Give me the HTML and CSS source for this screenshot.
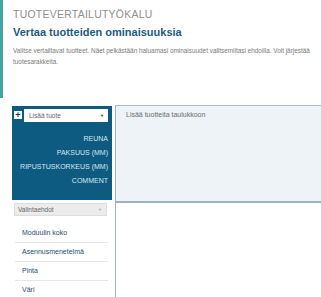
FILE: index.html
```html
<!DOCTYPE html>
<html lang="fi">
<head>
  <meta charset="UTF-8">
  <title>Tuotevertailutyökalu</title>
<link rel="stylesheet" href="styles.css">
</head>
<body>
  <div class="page">
    <div class="intro">
      <h1>Tuotevertailutyökalu</h1>
      <h2>Vertaa tuotteiden ominaisuuksia</h2>
      <p>Valitse vertailtavat tuotteet. Näet pelkästään haluamasi ominaisuudet valitsemiltasi ehdoilla. Voit järjestää tuotesarakkeita.</p>
    </div>

    <div class="tool">
      <div class="side">
        <div class="panel">
          <div class="add-row">
            <span class="plus">+</span>
            <div class="select white">
              <span>Lisää tuote</span>
              <span class="arrow">&#9660;</span>
            </div>
          </div>
          <ul class="labels">
            <li>Reuna</li>
            <li>Paksuus (mm)</li>
            <li>Ripustuskorkeus (mm)</li>
            <li>Comment</li>
          </ul>
        </div>

        <div class="select gray">
          <span>Valintaehdot</span>
          <span class="arrow">&#9660;</span>
        </div>
        <ul class="filters">
          <li>Moduulin koko</li>
          <li>Asennusmenetelmä</li>
          <li>Pinta</li>
          <li>Väri</li>
        </ul>
      </div>

      <div class="table">
        <div class="table-head">Lisää tuotteita taulukkoon</div>
        <div class="table-body"></div>
      </div>
    </div>
  </div>
</body>
</html>
```

FILE: styles.css
```css
body {
  margin: 0;
  font-family: "Liberation Sans", Arial, sans-serif;
  background: #fff;
  overflow: hidden;
}
.page {
  width: 321px;
}

.intro {
  border-left: 3px solid #3fa6a1;
  padding: 8px 0 0 10px;
  height: 98px;
  box-sizing: border-box;
}
.intro h1 {
  margin: 0;
  font-size: 10.4px;
  font-weight: normal;
  color: #8e8e8e;
  text-transform: uppercase;
  letter-spacing: 0.3px;
  line-height: 14px;
}
.intro h2 {
  margin: 3px 0 0;
  font-size: 11px;
  font-weight: bold;
  color: #1a5c7f;
  line-height: 15px;
}
.intro p {
  margin: 5px 0 0;
  font-size: 6.4px;
  line-height: 11px;
  color: #7a7a7a;
}

.tool {
  display: flex;
  gap: 3px;
  padding: 7px 0 0 12px;
}
.side {
  width: 100px;
}
.panel {
  background: #0d5b81;
  height: 94px;
  margin-top: 1px;
  padding: 2px 4px 0 2px;
  box-sizing: border-box;
}
.add-row {
  display: flex;
  align-items: center;
  gap: 2px;
}
.plus {
  width: 8px;
  height: 8px;
  background: #fff;
  color: #0d3a52;
  font: bold 9px/8px "Liberation Sans", sans-serif;
  text-align: center;
}
.select {
  display: flex;
  justify-content: space-between;
  align-items: center;
  height: 13px;
  box-sizing: border-box;
  padding: 0 4px 0 5px;
  font-size: 6.5px;
  color: #666;
}
.select.white {
  flex: 1;
  background: #fff;
  margin-top: 1px;
}
.select.gray {
  margin: 3px 0 0 2px;
  width: 93px;
  background: #ececec;
  border: 1px solid #ddd;
  padding-left: 3px;
}
.arrow {
  font-size: 4px;
  color: #333;
}
.gray .arrow {
  color: #aaa;
}

.labels {
  list-style: none;
  margin: 10px 0 0;
  padding: 0;
  text-align: right;
}
.labels li {
  font-size: 7px;
  line-height: 14px;
  color: #d7e6ef;
  text-transform: uppercase;
}

.filters {
  list-style: none;
  margin: 8px 0 0 3px;
  padding: 0;
  width: 93px;
}
.filters li {
  height: 18px;
  line-height: 18px;
  padding-left: 7px;
  font-size: 7px;
  color: #1f4e6b;
  border-bottom: 1px solid #e6e6e6;
}

.table {
  flex: 1;
  border-left: 1px solid #9fb2bf;
  height: 192px;
}
.table-head {
  height: 90px;
  background: #eef3f7;
  border-top: 1px solid #a9bac6;
  border-bottom: 2px solid #9db1be;
  padding: 5px 0 0 10px;
  font-size: 7px;
  color: #6d6d6d;
}
```
